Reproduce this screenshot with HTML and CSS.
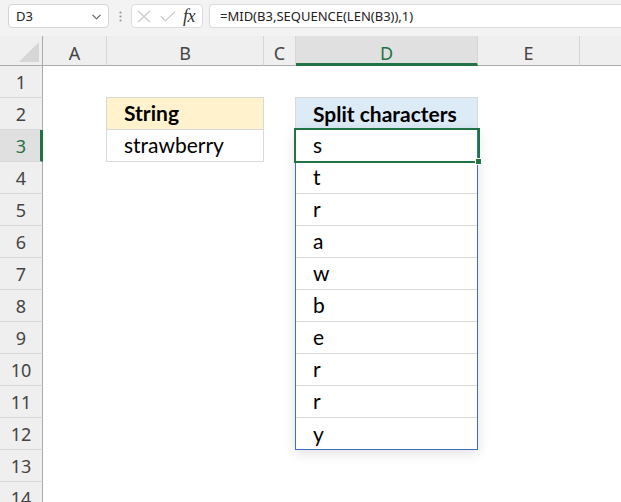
FILE: index.html
```html
<!DOCTYPE html>
<html>
<head>
<meta charset="utf-8">
<link rel="stylesheet" href="styles.css">
</head>
<body>
<div class="toolbar">
  <div class="namebox">
    <span class="name">D3</span>
    <svg class="chev" width="9" height="6" viewBox="0 0 9 6"><path d="M0.5 0.8 L4.5 4.8 L8.5 0.8" fill="none" stroke="#555" stroke-width="1.1"/></svg>
  </div>
  <div class="dots">
    <svg width="3" height="11" viewBox="0 0 3 11"><circle cx="1.5" cy="1.5" r="1.1" fill="#9a9a9a"/><circle cx="1.5" cy="5.5" r="1.1" fill="#9a9a9a"/><circle cx="1.5" cy="9.5" r="1.1" fill="#9a9a9a"/></svg>
  </div>
  <div class="fxbox">
    <svg class="ico-x" width="14" height="13" viewBox="0 0 14 13"><path d="M1 0.8 L13 12.2 M13 0.8 L1 12.2" stroke="#c2c2c2" stroke-width="1.1" fill="none"/></svg>
    <svg class="ico-ok" width="16" height="11" viewBox="0 0 16 11"><path d="M0.8 5.2 L5.3 9.8 L15.2 0.6" stroke="#c2c2c2" stroke-width="1.1" fill="none"/></svg>
    <span class="fx">fx</span>
  </div>
  <div class="formula">=MID(B3,SEQUENCE(LEN(B3)),1)</div>
</div>
<div class="sheet">
  <div class="corner"><svg width="30" height="20" viewBox="0 0 30 20"><path d="M30 0 L30 20 L10 20 Z" fill="#d6d6d6"/></svg></div>
  <div class="colhead">A</div>
  <div class="colhead">B</div>
  <div class="colhead">C</div>
  <div class="colhead sel">D</div>
  <div class="colhead">E</div>
  <div class="colhead last"></div>

  <div class="rowhead r1">1</div>
  <div class="rowhead r2">2</div>
  <div class="rowhead r3 sel">3</div>
  <div class="rowhead r4">4</div>
  <div class="rowhead r5">5</div>
  <div class="rowhead r6">6</div>
  <div class="rowhead r7">7</div>
  <div class="rowhead r8">8</div>
  <div class="rowhead r9">9</div>
  <div class="rowhead r10">10</div>
  <div class="rowhead r11">11</div>
  <div class="rowhead r12">12</div>
  <div class="rowhead r13">13</div>
  <div class="rowhead r14">14</div>

  <div class="cell b2 head-yellow">String</div>
  <div class="cell b3 boxed">strawberry</div>

  <div class="cell d2 head-blue">Split characters</div>

  <div class="spill"></div>
  <div class="cell dv r3v">s</div>
  <div class="cell dv r4v">t</div>
  <div class="cell dv r5v">r</div>
  <div class="cell dv r6v">a</div>
  <div class="cell dv r7v">w</div>
  <div class="cell dv r8v">b</div>
  <div class="cell dv r9v">e</div>
  <div class="cell dv r10v">r</div>
  <div class="cell dv r11v">r</div>
  <div class="cell dv r12v lastv">y</div>

  <div class="active"><span class="handle"></span></div>
</div>
</body>
</html>
```

FILE: styles.css
```css
html, body {
  margin: 0;
  padding: 0;
  background: #ffffff;
  overflow: hidden;
  width: 621px;
  height: 502px;
}

.toolbar {
  height: 36px;
  box-sizing: border-box;
  background: #f3f3f3;
  display: flex;
  align-items: flex-start;
  padding: 4px 0 0 8px;
  font-family: "Noto Sans", "Open Sans", sans-serif;
  font-size: 13px;
  color: #222;
}

.namebox {
  width: 101px;
  height: 24px;
  box-sizing: border-box;
  background: #fff;
  border: 1px solid #d4d4d4;
  border-radius: 4px;
  display: flex;
  align-items: center;
  justify-content: space-between;
  padding: 0 7px 0 7px;
}

.name {
  line-height: 1;
}

.chev {
  display: block;
  margin-top: 1px;
}

.dots {
  width: 22px;
  height: 24px;
  display: flex;
  align-items: center;
  justify-content: center;
}

.dots svg {
  display: block;
}

.fxbox {
  width: 72px;
  height: 24px;
  box-sizing: border-box;
  background: #fff;
  border: 1px solid #dcdcdc;
  border-radius: 4px;
  display: flex;
  align-items: center;
  padding-left: 5px;
}

.ico-x {
  display: block;
  margin-top: 1px;
}

.ico-ok {
  display: block;
  margin-left: 9px;
  margin-top: 1px;
}

.fx {
  font-family: "Liberation Serif", "DejaVu Serif", serif;
  font-style: italic;
  font-size: 18px;
  color: #333;
  margin-left: 7px;
  line-height: 1;
  letter-spacing: -0.5px;
}

.formula {
  flex: 1;
  height: 24px;
  margin-left: 6px;
  box-sizing: border-box;
  background: #fff;
  border: 1px solid #dcdcdc;
  border-right: none;
  border-radius: 4px 0 0 4px;
  display: flex;
  align-items: center;
  padding-left: 10px;
  white-space: nowrap;
}

.sheet {
  display: grid;
  grid-template-columns: 43px 64px 157px 32px 182px 102px 1fr;
  grid-template-rows: 30px repeat(14, 32px);
  font-family: "Lato", "Carlito", sans-serif;
}

.corner {
  grid-row: 1;
  grid-column: 1;
  background: #efefef;
  border-right: 1px solid #ababab;
  border-bottom: 1px solid #ababab;
  box-sizing: border-box;
  display: flex;
  align-items: flex-end;
  justify-content: flex-end;
  padding: 0 3px 3px 0;
}

.corner svg {
  display: block;
}

.colhead {
  grid-row: 1;
  background: #efefef;
  border-right: 1px solid #d6d6d6;
  border-bottom: 1px solid #ababab;
  box-sizing: border-box;
  display: flex;
  align-items: center;
  justify-content: center;
  padding-top: 4px;
  font-family: "Noto Sans", "Open Sans", sans-serif;
  font-size: 18px;
  color: #444;
}

.colhead.sel {
  background: #e0e0e0;
  color: #217346;
  border-bottom: 3px solid #217346;
  padding-top: 6px;
}

.colhead.last {
  border-right: none;
}

.rowhead {
  grid-column: 1;
  background: #efefef;
  border-right: 1px solid #ababab;
  border-bottom: 1px solid #d6d6d6;
  box-sizing: border-box;
  display: flex;
  align-items: center;
  justify-content: center;
  font-family: "Noto Sans", "Open Sans", sans-serif;
  font-size: 18px;
  color: #444;
}

.rowhead.sel {
  background: #e0e0e0;
  color: #217346;
  border-right: 3px solid #217346;
  padding-left: 2px;
}

.r1 { grid-row: 2; }
.r2 { grid-row: 3; }
.r3 { grid-row: 4; }
.r4 { grid-row: 5; }
.r5 { grid-row: 6; }
.r6 { grid-row: 7; }
.r7 { grid-row: 8; }
.r8 { grid-row: 9; }
.r9 { grid-row: 10; }
.r10 { grid-row: 11; }
.r11 { grid-row: 12; }
.r12 { grid-row: 13; }
.r13 { grid-row: 14; }
.r14 { grid-row: 15; }

.cell {
  box-sizing: border-box;
  display: flex;
  align-items: flex-end;
  padding: 0 0 6px 17px;
  font-size: 21px;
  color: #000;
  line-height: 1;
  white-space: nowrap;
}

.b2 {
  grid-row: 3;
  grid-column: 3;
  margin: -1px 0 0 -1px;
  border: 1px solid #d9d9d9;
  background: #fff2cc;
  font-weight: bold;
}

.b3 {
  grid-row: 4;
  grid-column: 3;
  margin-left: -1px;
  border: 1px solid #d9d9d9;
  border-top: none;
}

.d2 {
  grid-row: 3;
  grid-column: 5;
  margin: -1px 0 0 -1px;
  border: 1px solid #d9d9d9;
  border-bottom: none;
  background: #ddebf7;
  font-weight: bold;
}

.spill {
  grid-row: 4 / 14;
  grid-column: 5;
  margin: -1px 0 0 -1px;
  border: 1px solid #3f6fc0;
  box-shadow: 0 3px 12px rgba(0, 0, 0, 0.13);
  background: #fff;
}

.dv {
  grid-column: 5;
  border-bottom: 1px solid #d9d9d9;
  margin-right: 1px;
}

.dv.lastv {
  border-bottom: none;
}

.r3v { grid-row: 4; }
.r4v { grid-row: 5; }
.r5v { grid-row: 6; }
.r6v { grid-row: 7; }
.r7v { grid-row: 8; }
.r8v { grid-row: 9; }
.r9v { grid-row: 10; }
.r10v { grid-row: 11; }
.r11v { grid-row: 12; }
.r12v { grid-row: 13; }

.active {
  grid-row: 4;
  grid-column: 5;
  margin: -2px -2px -1px -2px;
  border: 2px solid #217346;
  position: relative;
}

.handle {
  position: absolute;
  right: -4px;
  bottom: -4px;
  width: 5px;
  height: 5px;
  background: #217346;
  border: 1px solid #fff;
}
```
